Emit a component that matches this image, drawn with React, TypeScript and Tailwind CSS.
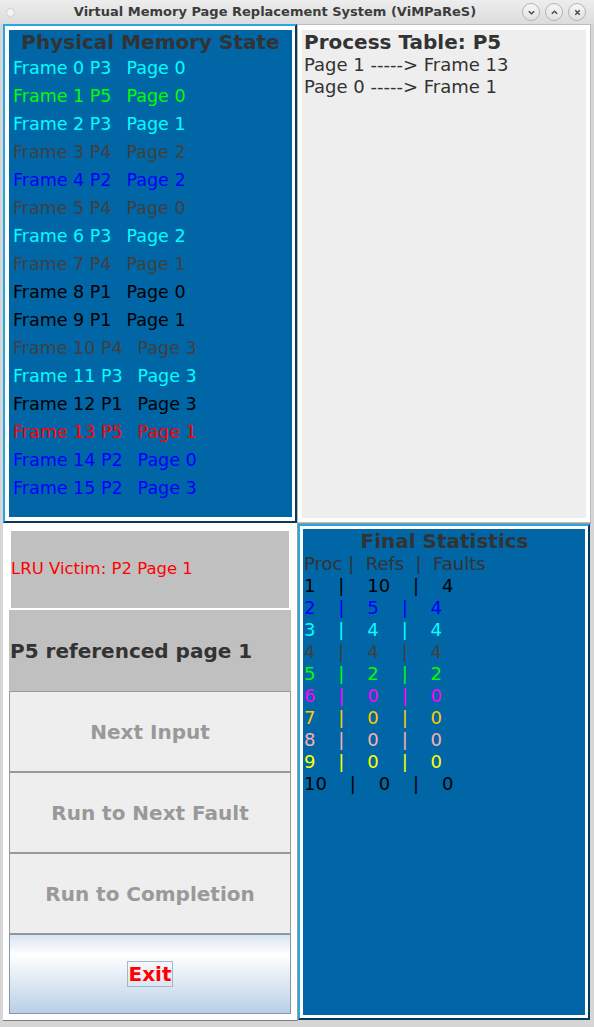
import React from 'react'

const PROC_COLORS: Record<number, string> = {
  1: '#000000',
  2: '#0000ff',
  3: '#00ffff',
  4: '#404040',
  5: '#00ff00',
  6: '#ff00ff',
  7: '#ffc800',
  8: '#ffafaf',
  9: '#ffff00',
  10: '#000000',
}

// frame, process, page
const frames: [number, number, number][] = [
  [0, 3, 0], [1, 5, 0], [2, 3, 1], [3, 4, 2], [4, 2, 2], [5, 4, 0], [6, 3, 2], [7, 4, 1],
  [8, 1, 0], [9, 1, 1], [10, 4, 3], [11, 3, 3], [12, 1, 3], [13, 5, 1], [14, 2, 0], [15, 2, 3],
]

const stats: [number, number, number][] = [
  [1, 10, 4], [2, 5, 4], [3, 4, 4], [4, 4, 4], [5, 2, 2],
  [6, 0, 0], [7, 0, 0], [8, 0, 0], [9, 0, 0], [10, 0, 0],
]

function TitleButton({ children }: { children: React.ReactNode }) {
  return (
    <div className="flex h-[18px] w-[18px] items-center justify-center rounded-full border border-[#b4b4b4] bg-gradient-to-b from-[#f6f6f6] to-[#e2e2e2]">
      {children}
    </div>
  )
}

function TitleBar() {
  return (
    <div className="flex h-[24px] items-center bg-gradient-to-b from-[#ededed] to-[#dcdcdc]">
      <div className="flex w-[30px] items-center pl-[6px]">
        <div className="h-[9px] w-[9px] rounded-full border border-[#cfcfcf] bg-[#f4f4f4]" />
      </div>
      <div className="flex-1 text-center text-[13px] font-bold text-[#3c3c3c]">
        Virtual Memory Page Replacement System (ViMPaReS)
      </div>
      <div className="flex w-[74px] items-center gap-[5px] pl-[2px]">
        <TitleButton>
          <svg width="9" height="9" viewBox="0 0 10 10" fill="none" stroke="#4a4a4a" strokeWidth="1.6">
            <path d="M2 3.5 L5 6.5 L8 3.5" />
          </svg>
        </TitleButton>
        <TitleButton>
          <svg width="9" height="9" viewBox="0 0 10 10" fill="none" stroke="#4a4a4a" strokeWidth="1.6">
            <path d="M2 6.5 L5 3.5 L8 6.5" />
          </svg>
        </TitleButton>
        <TitleButton>
          <svg width="9" height="9" viewBox="0 0 10 10" fill="none" stroke="#4a4a4a" strokeWidth="1.6">
            <path d="M2.5 2.5 L7.5 7.5 M7.5 2.5 L2.5 7.5" />
          </svg>
        </TitleButton>
      </div>
    </div>
  )
}

function MemoryPanel() {
  return (
    <div className="flex border-2 border-t-[#2aa6e0] border-l-[#2aa6e0] border-r-[#043a5e] border-b-[#043a5e] bg-white pt-[4px] pl-[4px] pr-[3px] pb-[4px]">
      <div className="flex-1 bg-[#0066a6]">
        <div className="h-[24px] text-center text-[20px] font-bold leading-[24px] text-[#333333]">
          Physical Memory State
        </div>
        <div className="pl-[4px]">
          {frames.map(([f, p, pg]) => (
            <div
              key={f}
              className="flex h-[28px] items-center whitespace-pre text-[17.5px]"
              style={{ color: f === 13 ? '#ff0000' : PROC_COLORS[p] }}
            >
              <span>{`Frame ${f} P${p}`}</span>
              <span className="ml-[15px]">{`Page ${pg}`}</span>
            </div>
          ))}
        </div>
      </div>
    </div>
  )
}

function ProcessTable() {
  return (
    <div className="flex border border-[#bcbcbc] bg-white pt-[5px] pl-[4px] pr-[4px] pb-[4px]">
      <div className="flex-1 bg-[#eeeeee] pl-[2px] text-[#333333]">
        <div className="h-[24px] text-[20px] font-bold leading-[24px]">Process Table: P5</div>
        <div className="whitespace-pre text-[18px] leading-[22px]">{'Page 1 -----> Frame 13'}</div>
        <div className="whitespace-pre text-[18px] leading-[22px]">{'Page 0 -----> Frame 1'}</div>
      </div>
    </div>
  )
}

function ControlPanel() {
  const btn =
    'flex h-[81px] items-center justify-center border border-[#999999] bg-[#eeeeee] text-[20px] font-bold text-[#999999]'
  return (
    <div className="flex flex-col border-b border-[#7a7a7a] bg-white px-[6px] pt-[6px] pb-[5px]">
      <div className="flex h-[81px] p-[2px]">
        <div className="flex flex-1 items-center bg-[#c0c0c0] text-[16.5px] text-[#ff0000]">
          LRU Victim: P2 Page 1
        </div>
      </div>
      <div className="flex h-[81px] items-center bg-[#c0c0c0] pl-[1px] text-[20px] font-bold text-[#333333]">
        P5 referenced page 1
      </div>
      <div className={btn}>Next Input</div>
      <div className={btn}>Run to Next Fault</div>
      <div className={btn}>Run to Completion</div>
      <div className="flex h-[80px] items-center justify-center border border-[#8296ac] bg-[linear-gradient(to_bottom,#d8e4f1_0%,#ffffff_25%,#e4ecf5_55%,#b9cfe6_100%)]">
        <span className="border border-[#a3b6ca] px-[1px] text-[20px] font-bold leading-[24px] text-[#ff0000]">
          Exit
        </span>
      </div>
    </div>
  )
}

function StatsPanel() {
  return (
    <div className="flex border-t border-l border-[#9a9a9a] pr-[1px] pb-[1px]">
      <div className="flex flex-1 border-2 border-t-[#2aa6e0] border-l-[#2aa6e0] border-r-[#043a5e] border-b-[#043a5e] bg-white p-[3px]">
        <div className="flex-1 bg-[#0066a6] pl-[1px]">
          <div className="h-[24px] text-center text-[20px] font-bold leading-[24px] text-[#333333]">
            Final Statistics
          </div>
          <div className="whitespace-pre text-[18px] leading-[22px] text-[#333333]">{'Proc |  Refs  |  Faults'}</div>
          {stats.map(([p, r, f]) => (
            <div key={p} className="whitespace-pre text-[18px] leading-[22px]" style={{ color: PROC_COLORS[p] }}>
              {`${p}    |    ${r}    |    ${f}`}
            </div>
          ))}
        </div>
      </div>
    </div>
  )
}

export default function App() {
  return (
    <div
      className="flex h-[1027px] w-[594px] flex-col overflow-hidden bg-[#d6d6d6]"
      style={{ fontFamily: '"DejaVu Sans", sans-serif' }}
    >
      <TitleBar />
      <div className="grid grid-cols-[294px_294px] grid-rows-[499px_498px] px-[3px]">
        <MemoryPanel />
        <ProcessTable />
        <ControlPanel />
        <StatsPanel />
      </div>
    </div>
  )
}
